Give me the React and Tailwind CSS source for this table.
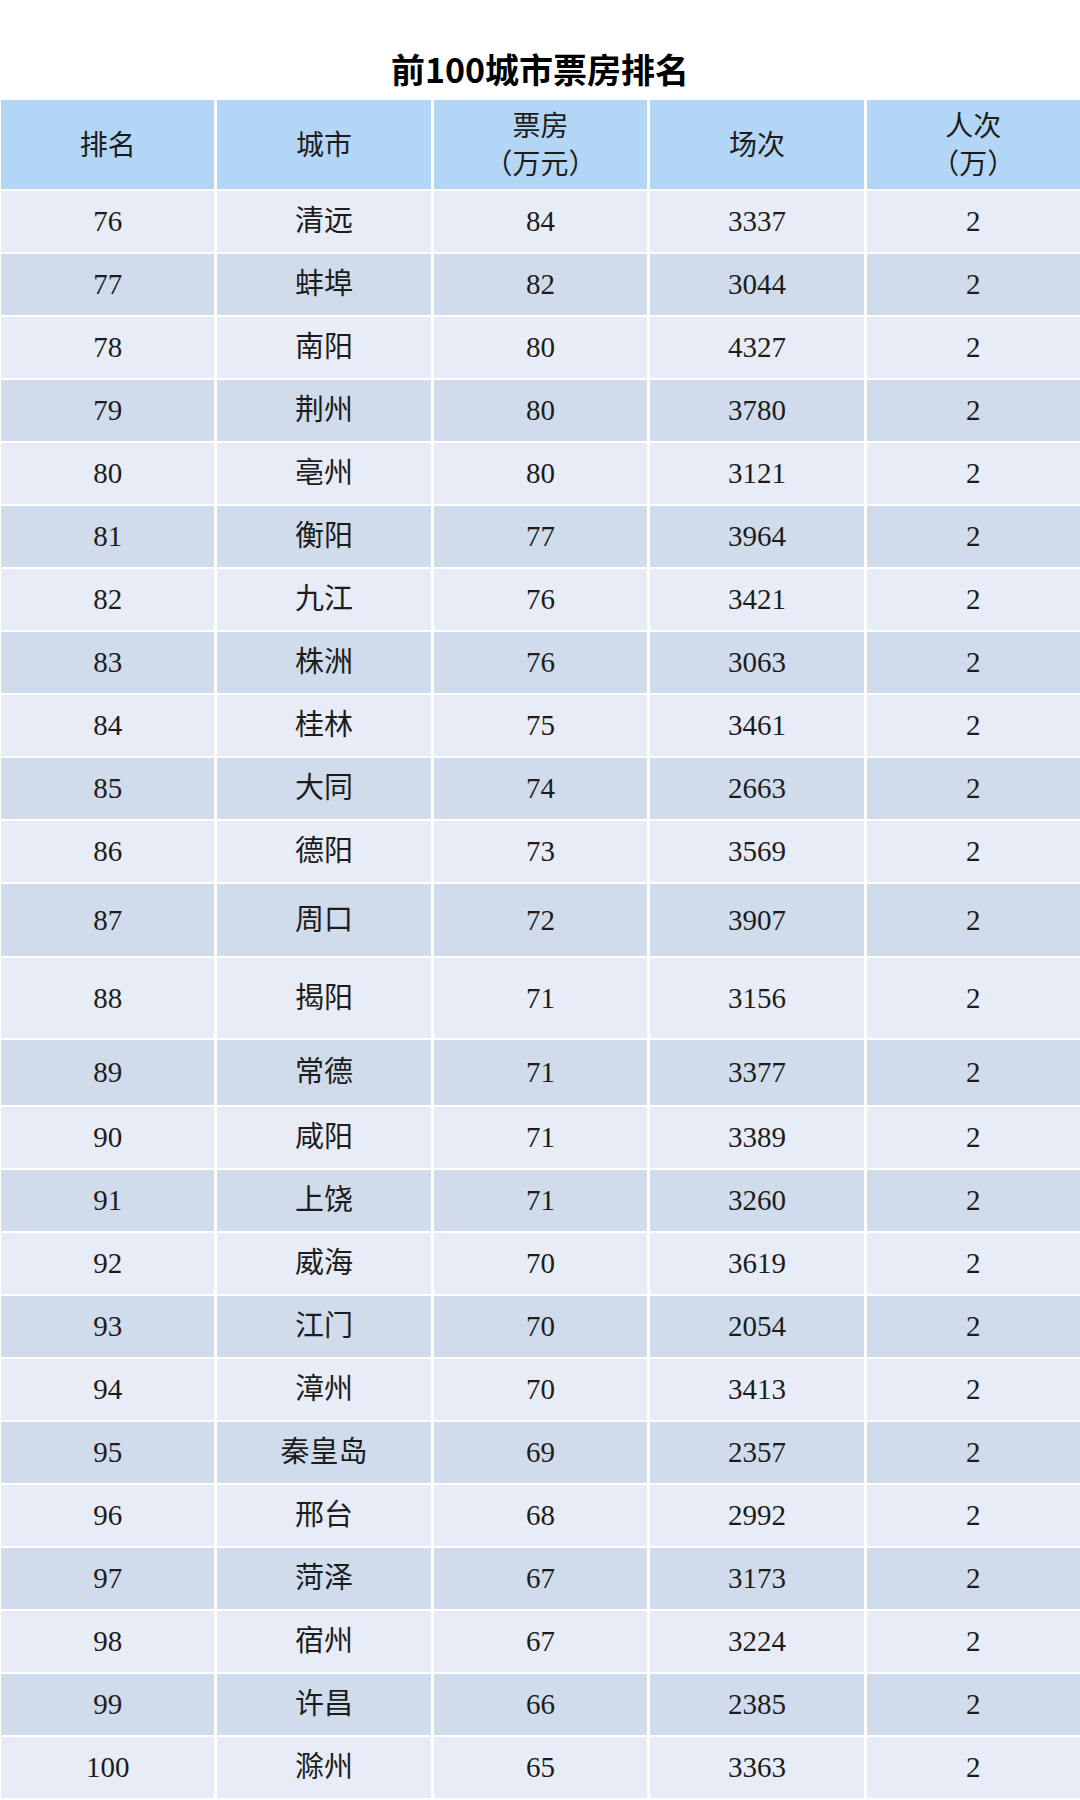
import React from "react";

const rows = [
  ["76", "清远", "84", "3337", "2"],
  ["77", "蚌埠", "82", "3044", "2"],
  ["78", "南阳", "80", "4327", "2"],
  ["79", "荆州", "80", "3780", "2"],
  ["80", "亳州", "80", "3121", "2"],
  ["81", "衡阳", "77", "3964", "2"],
  ["82", "九江", "76", "3421", "2"],
  ["83", "株洲", "76", "3063", "2"],
  ["84", "桂林", "75", "3461", "2"],
  ["85", "大同", "74", "2663", "2"],
  ["86", "德阳", "73", "3569", "2"],
  ["87", "周口", "72", "3907", "2"],
  ["88", "揭阳", "71", "3156", "2"],
  ["89", "常德", "71", "3377", "2"],
  ["90", "咸阳", "71", "3389", "2"],
  ["91", "上饶", "71", "3260", "2"],
  ["92", "威海", "70", "3619", "2"],
  ["93", "江门", "70", "2054", "2"],
  ["94", "漳州", "70", "3413", "2"],
  ["95", "秦皇岛", "69", "2357", "2"],
  ["96", "邢台", "68", "2992", "2"],
  ["97", "菏泽", "67", "3173", "2"],
  ["98", "宿州", "67", "3224", "2"],
  ["99", "许昌", "66", "2385", "2"],
  ["100", "滁州", "65", "3363", "2"],
];

// a few rows in the source are taller than the rest
const rowHeight = (rank) => {
  if (rank === "87") return "h-[72px]";
  if (rank === "88") return "h-[80px]";
  if (rank === "89") return "h-[65px]";
  return "h-[61px]";
};

const headers = [
  ["排名"],
  ["城市"],
  ["票房", "（万元）"],
  ["场次"],
  ["人次", "（万）"],
];

export default function App() {
  return (
    <div className="w-[1080px] min-h-[1800px] bg-white text-[#1c1c1c] font-['Liberation_Serif','Noto_Sans_CJK_SC',serif]">
      <div className="h-[100px] flex items-end justify-center pb-[14px]">
        <h1 className="text-[34px] leading-none font-bold text-black font-['Noto_Sans_CJK_SC',sans-serif]">
          前100城市票房排名
        </h1>
      </div>

      <div className="grid grid-cols-5 gap-x-[3px] gap-y-[2px] pl-[1px]">
        {headers.map((lines, i) => (
          <div
            key={i}
            className="h-[89px] bg-[#b3d6f7] flex flex-col items-center justify-center text-[28px] leading-[38px] pt-[3px]"
          >
            {lines.map((l) => (
              <span key={l}>{l}</span>
            ))}
          </div>
        ))}

        {rows.map((row, r) =>
          row.map((cell, c) => (
            <div
              key={r + "-" + c}
              className={
                "flex items-center justify-center text-[29px] leading-none " +
                rowHeight(row[0]) +
                (r % 2 === 0 ? " bg-[#e8ecf6]" : " bg-[#d0dcec]")
              }
            >
              {cell}
            </div>
          ))
        )}
      </div>
    </div>
  );
}
